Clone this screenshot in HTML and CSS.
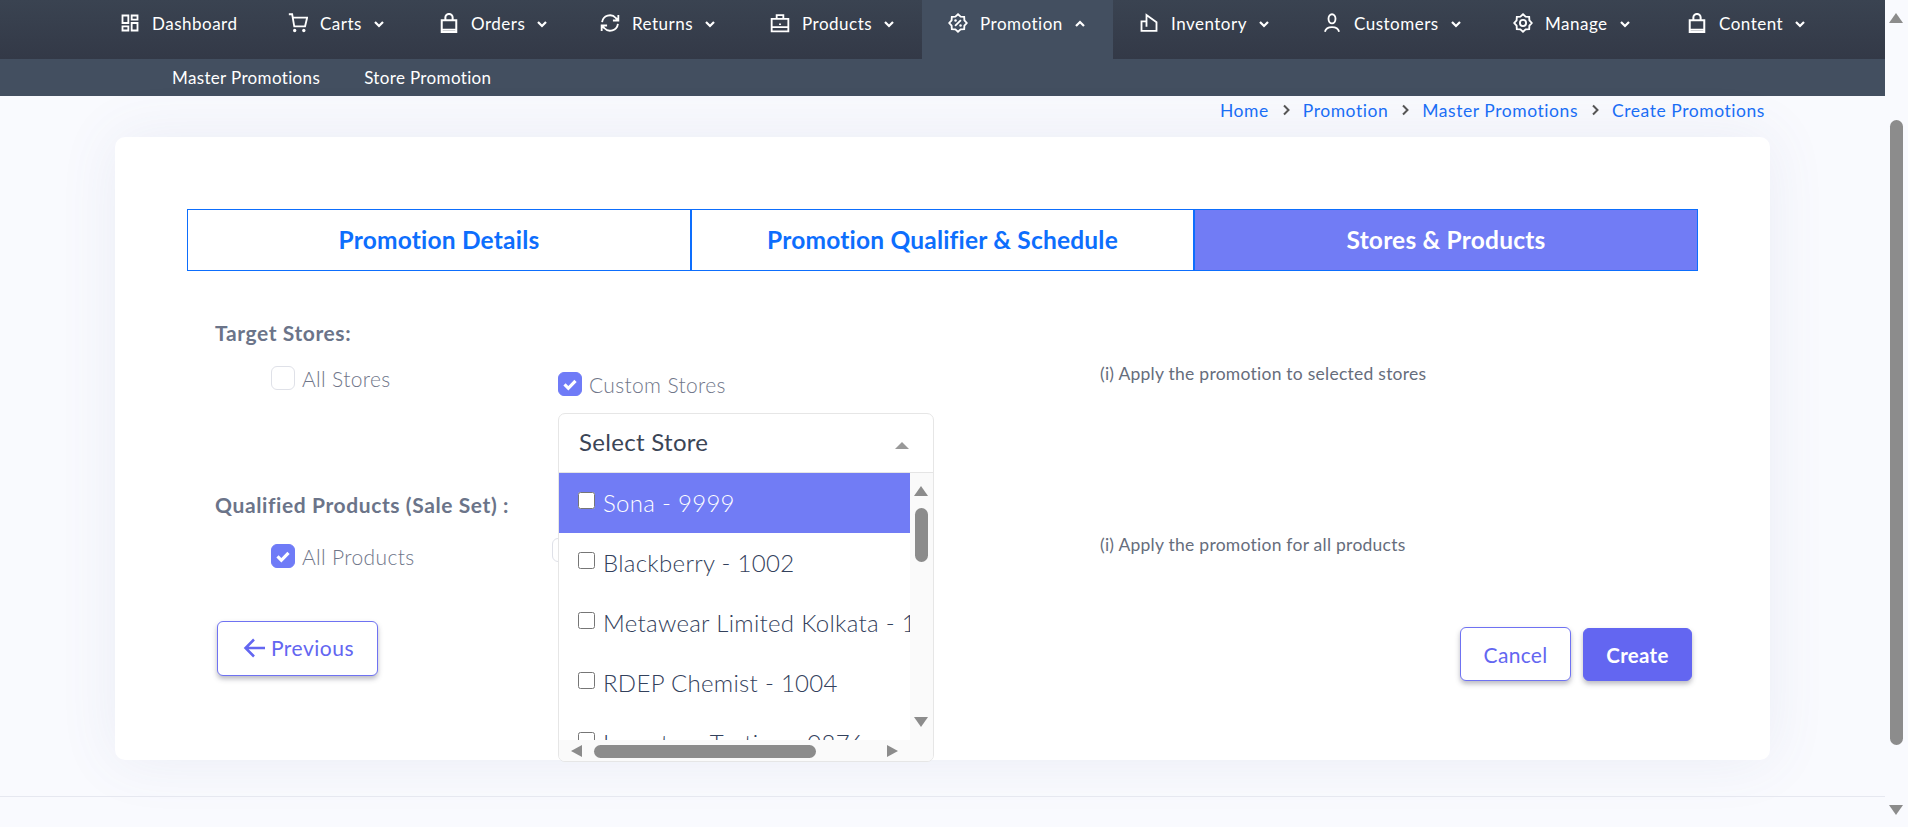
FILE: index.html

```html
<!DOCTYPE html>
<html lang="en">
<head>
    <meta charset="UTF-8">
    <title>Create Promotions</title>
    <link rel="stylesheet" href="styles.css">
</head>
<body>
    <svg class="defs" width="0" height="0">
        <symbol id="i-bag" viewBox="3 1 18 22"><path d="M4 9h16v13H4zM8 9V6a4 4 0 0 1 8 0v3M4 19.500h16"/></symbol>
        <symbol id="i-chev" viewBox="0 0 24 24"><path d="M4 8l8 8 8-8"/></symbol>
        <symbol id="i-chev-up" viewBox="0 0 24 24"><path d="M4 16l8-8 8 8"/></symbol>
        <symbol id="i-right" viewBox="0 0 12 12"><path d="M4 1.500L8.500 6 4 10.500"/></symbol>
        <symbol id="i-tick" viewBox="0 0 24 24"><path d="M6 12.500l4.200 4.200L18 8.500"/></symbol>
    </svg>

    <div class="page">
        <div class="main">
            <div class="topbar">
                <nav class="menu">
                    <a class="menu-item menu-first">
                        <svg class="ico" viewBox="0 0 24 24"><path d="M3 3h7v9H3zM14 3h7v5h-7zM3 16h7v5H3zM14 12h7v9h-7z"/></svg>
                        <span>Dashboard</span>
                    </a>
                    <a class="menu-item">
                        <svg class="ico" viewBox="0 0 24 24"><path d="M1 1.500h4l2.500 14.500h13L23 5.500H5.700"/><circle class="dot" cx="8" cy="21" r="2"/><circle class="dot" cx="19" cy="21" r="2"/></svg>
                        <span>Carts</span>
                        <svg class="chev"><use href="#i-chev"/></svg>
                    </a>
                    <a class="menu-item">
                        <svg class="ico"><use href="#i-bag"/></svg>
                        <span>Orders</span>
                        <svg class="chev"><use href="#i-chev"/></svg>
                    </a>
                    <a class="menu-item">
                        <svg class="ico" viewBox="0 0 24 24"><path d="M2.500 11a9.500 9.500 0 0 1 16.500-5L22 9M22 2.500V9h-6.500M21.500 13a9.500 9.500 0 0 1-16.500 5L2 15M2 21.500V15h6.500"/></svg>
                        <span>Returns</span>
                        <svg class="chev"><use href="#i-chev"/></svg>
                    </a>
                    <a class="menu-item">
                        <svg class="ico" viewBox="0 0 24 24"><path d="M2 7h20v15H2zM8 7V2.500h8V7M2 17h20M12 12.500v2"/></svg>
                        <span>Products</span>
                        <svg class="chev"><use href="#i-chev"/></svg>
                    </a>
                    <a class="menu-item is-open">
                        <svg class="ico" viewBox="0 0 24 24"><path d="M12 1.500l3.180 2.830 4.240.25.25 4.240L22.500 12l-2.830 3.180-.25 4.240-4.240.25L12 22.500l-3.180-2.830-4.240-.25-.25-4.240L1.500 12l2.830-3.180.25-4.240 4.240-.25zM8.500 15.500l7-7"/><circle class="dot" cx="9" cy="9" r="1.500"/><circle class="dot" cx="15" cy="15" r="1.500"/></svg>
                        <span>Promotion</span>
                        <svg class="chev"><use href="#i-chev-up"/></svg>
                    </a>
                    <a class="menu-item">
                        <svg class="ico" viewBox="0 0 24 24"><path d="M3 21.500V10h6V2.500l12 8.500v10.500zM9 10v6.500"/></svg>
                        <span>Inventory</span>
                        <svg class="chev"><use href="#i-chev"/></svg>
                    </a>
                    <a class="menu-item">
                        <svg class="ico" viewBox="0 0 24 24"><ellipse cx="12" cy="7" rx="4.200" ry="5.500"/><path d="M3.500 22.500c1-4 4-5.500 8.500-5.500s7.500 1.500 8.500 5.500"/></svg>
                        <span>Customers</span>
                        <svg class="chev"><use href="#i-chev"/></svg>
                    </a>
                    <a class="menu-item">
                        <svg class="ico" viewBox="0 0 24 24"><path d="M12 1.500l3.180 2.830 4.240.25.25 4.240L22.500 12l-2.830 3.180-.25 4.240-4.240.25L12 22.500l-3.180-2.830-4.240-.25-.25-4.240L1.500 12l2.830-3.180.25-4.240 4.240-.25z"/><circle cx="12" cy="12" r="3.700"/></svg>
                        <span>Manage</span>
                        <svg class="chev"><use href="#i-chev"/></svg>
                    </a>
                    <a class="menu-item">
                        <svg class="ico"><use href="#i-bag"/></svg>
                        <span>Content</span>
                        <svg class="chev"><use href="#i-chev"/></svg>
                    </a>
                </nav>
                <div class="submenu">
                    <a>Master Promotions</a>
                    <a>Store Promotion</a>
                </div>
            </div>

            <div class="crumbs">
                <a>Home</a>
                <svg class="crumb-sep"><use href="#i-right"/></svg>
                <a>Promotion</a>
                <svg class="crumb-sep"><use href="#i-right"/></svg>
                <a>Master Promotions</a>
                <svg class="crumb-sep"><use href="#i-right"/></svg>
                <a>Create Promotions</a>
            </div>

            <div class="card">
                <div class="tabs">
                    <div class="tab">Promotion Details</div>
                    <div class="tab">Promotion Qualifier &amp; Schedule</div>
                    <div class="tab is-active">Stores &amp; Products</div>
                </div>

                <div class="form">
                    <div class="group-title">Target Stores:</div>
                    <div class="opts">
                        <label class="opt opt-first"><span class="check"></span>All Stores</label>
                        <div class="opt-custom">
                            <label class="opt"><span class="check is-on"><svg><use href="#i-tick"/></svg></span>Custom Stores</label>
                            <div class="store-select">
                                <div class="select-head">
                                    <span>Select Store</span>
                                    <span class="caret"></span>
                                </div>
                                <div class="select-body">
                                    <div class="select-list">
                                        <label class="store is-hover"><input type="checkbox"><span>Sona - 9999</span></label>
                                        <label class="store"><input type="checkbox"><span>Blackberry - 1002</span></label>
                                        <label class="store"><input type="checkbox"><span>Metawear Limited Kolkata - 1003</span></label>
                                        <label class="store"><input type="checkbox"><span>RDEP Chemist - 1004</span></label>
                                        <label class="store"><input type="checkbox"><span>Inventory Testing - 0876</span></label>
                                    </div>
                                    <div class="vbar">
                                        <span class="tri tri-up"></span>
                                        <span class="vthumb"></span>
                                        <span class="tri tri-down"></span>
                                    </div>
                                    <div class="hbar">
                                        <span class="tri tri-left"></span>
                                        <span class="hthumb"></span>
                                        <span class="tri tri-right"></span>
                                    </div>
                                </div>
                            </div>
                        </div>
                        <div class="hint">(i) Apply the promotion to selected stores</div>
                    </div>

                    <div class="group-title group-two">Qualified Products (Sale Set) :</div>
                    <div class="opts opts-two">
                        <label class="opt opt-first"><span class="check is-on"><svg><use href="#i-tick"/></svg></span>All Products</label>
                        <div class="opt-hidden"><span class="check"></span></div>
                        <div class="hint hint-two">(i) Apply the promotion for all products</div>
                    </div>

                    <div class="actions">
                        <button class="btn btn-prev">
                            <svg viewBox="0 0 24 24"><path d="M22 12H3M11 3.500L2.500 12l8.500 8.500"/></svg>Previous
                        </button>
                        <div class="actions-right">
                            <button class="btn btn-cancel">Cancel</button>
                            <button class="btn btn-create">Create</button>
                        </div>
                    </div>
                </div>
            </div>

            <div class="footer"></div>
        </div>

        <div class="pagebar">
            <span class="tri-page tri-page-up"></span>
            <span class="pagebar-thumb"></span>
            <span class="tri-page tri-page-down"></span>
        </div>
    </div>
</body>
</html>
```

FILE: styles.css

```css
* {
    box-sizing: border-box;
}

html, body {
    margin: 0;
    height: 827px;
    overflow: hidden;
}

body {
    font-family: "Lato", "Open Sans", sans-serif;
    font-size: 16px;
    background: #f9fafe;
    color: #3b4556;
}

.defs {
    position: absolute;
}

.page {
    display: flex;
    height: 827px;
}

.main {
    flex: 1;
    min-width: 0;
}

/* top navigation */
.topbar {
    background: #434f60;
    height: 96px;
}

.menu {
    display: grid;
    grid-template-columns: 167px 151px 161px 170px 178px 191px 183px 191px 174px 1fr;
    height: 59px;
    padding-left: 95px;
    background: linear-gradient(to bottom, #3a4351, #333947);
}

.menu-item {
    display: flex;
    align-items: center;
    padding: 0 0 2px 26px;
    height: 48px;
    color: #fff;
    letter-spacing: 0.5px;
    font-size: 17px;
}

.menu-first {
    padding-left: 25px;
}

.menu-item.is-open {
    background: #434f60;
    height: 59px;
    padding-bottom: 13px;
}

.ico {
    width: 20px;
    height: 20px;
    margin-right: 12px;
    fill: none;
    stroke: #fff;
    stroke-width: 2.200;
    flex: none;
}

.ico .dot {
    fill: #fff;
    stroke: none;
}

.chev {
    width: 12px;
    height: 12px;
    margin-left: 11px;
    margin-top: 2px;
    fill: none;
    stroke: #fff;
    stroke-width: 4.500;
    flex: none;
}

.submenu {
    display: flex;
    gap: 44px;
    height: 37px;
    align-items: center;
    padding-left: 172px;
    color: #fff;
    font-size: 17px;
    letter-spacing: 0.35px;
}

/* breadcrumb */
.crumbs {
    display: flex;
    justify-content: flex-end;
    align-items: center;
    height: 28px;
    padding-right: 120px;
    color: #1a6ef5;
    font-size: 17.500px;
    letter-spacing: 0.55px;
}

.crumb-sep {
    width: 12px;
    height: 12px;
    margin: 0 11px;
    fill: none;
    stroke: #555;
    stroke-width: 2;
}

/* card */
.card {
    width: 1655px;
    height: 623px;
    margin: 13px 0 0 115px;
    padding: 72px 72px 0;
    background: #fff;
    border-radius: 10px;
    box-shadow: 0 0 60px rgba(90, 100, 150, 0.09);
}

.tabs {
    display: grid;
    grid-template-columns: 502px 503px 1fr;
    height: 62px;
    border: 1px solid #0d6efd;
}

.tab {
    display: flex;
    align-items: center;
    justify-content: center;
    padding-bottom: 2px;
    color: #0d6efd;
    font-size: 24.500px;
    font-weight: 700;
    letter-spacing: 0.2px;
    border-left: 2px solid #0d6efd;
}

.tab:first-child {
    border-left: 0;
}

.tab.is-active {
    background: #717cf5;
    color: #fff;
}

.form {
    padding: 50px 6px 0 28px;
}

.group-title {
    height: 24px;
    line-height: 24px;
    font-size: 21px;
    font-weight: 700;
    color: #6b7489;
    letter-spacing: 0.6px;
}

.group-two {
    margin-top: 103px;
}

.opts {
    display: grid;
    grid-template-columns: 343px 542px 1fr;
    margin-top: 21px;
    height: 24px;
}

.opts-two {
    margin-top: 27px;
}

.opt {
    display: flex;
    align-items: center;
    height: 24px;
    font-size: 21px;
    font-weight: 300;
    color: #6f7689;
    letter-spacing: 0.35px;
}

.opt-first {
    padding-left: 56px;
}

.opt-custom {
    position: relative;
    padding-top: 6px;
}

.opt-hidden {
    margin: -6px 0 0 -6px;
}

.check {
    display: flex;
    align-items: center;
    justify-content: center;
    width: 24px;
    height: 24px;
    margin-right: 7px;
    background: #fff;
    border: 1px solid #dfe1e8;
    border-radius: 6px;
}

.check.is-on {
    background: #6f7bf7;
    border-color: #6f7bf7;
}

.check svg {
    width: 22px;
    height: 22px;
    fill: none;
    stroke: #fff;
    stroke-width: 3.500;
}

.hint {
    margin-top: -3px;
    font-size: 17.500px;
    color: #666d7c;
    letter-spacing: 0.25px;
}

.hint-two {
    margin-top: -10px;
}

/* store dropdown, sits over the rows below */
.store-select {
    position: absolute;
    top: 47px;
    left: 0;
    z-index: 2;
    width: 376px;
    height: 349px;
    background: #fff;
    border: 1px solid #e6e6e6;
    border-radius: 7px;
    overflow: hidden;
}

.select-head {
    display: flex;
    align-items: center;
    justify-content: space-between;
    height: 59px;
    padding: 0 24px 4px 20px;
    font-size: 24px;
    color: #3b4556;
    border-bottom: 1px solid #e5e5e5;
    letter-spacing: 0.3px;
}

.caret {
    margin-top: 9px;
    border-left: 7px solid transparent;
    border-right: 7px solid transparent;
    border-bottom: 7px solid #999;
}

.select-body {
    position: relative;
    height: 289px;
}

.select-list {
    width: 351px;
    height: 267px;
    overflow: hidden;
}

.store {
    display: flex;
    align-items: center;
    height: 60px;
    padding: 0 0 1px 19px;
    font-size: 24px;
    font-weight: 300;
    color: #33415c;
    white-space: nowrap;
    letter-spacing: 0.3px;
}

.store input {
    width: 17px;
    height: 17px;
    margin: -4px 8px 0 0;
    flex: none;
}

.store.is-hover {
    background: #717cf5;
    color: #fff;
}

.vbar {
    position: absolute;
    top: 0;
    right: 0;
    width: 23px;
    height: 267px;
    background: #fafafa;
}

.vthumb {
    position: absolute;
    top: 35px;
    left: 5px;
    width: 13px;
    height: 54px;
    background: #8c8c8c;
    border-radius: 7px;
}

.hbar {
    position: absolute;
    left: 0;
    right: 0;
    bottom: 0;
    height: 22px;
    background: #fafafa;
}

.hthumb {
    position: absolute;
    top: 5px;
    left: 35px;
    width: 222px;
    height: 13px;
    background: #8c8c8c;
    border-radius: 7px;
}

.tri {
    position: absolute;
    width: 0;
    height: 0;
}

.tri-up {
    top: 13px;
    left: 4px;
    border-left: 7.500px solid transparent;
    border-right: 7.500px solid transparent;
    border-bottom: 10px solid #8c8c8c;
}

.tri-down {
    top: 244px;
    left: 4px;
    border-left: 7.500px solid transparent;
    border-right: 7.500px solid transparent;
    border-top: 10px solid #8c8c8c;
}

.tri-left {
    top: 5px;
    left: 12px;
    border-top: 6.500px solid transparent;
    border-bottom: 6.500px solid transparent;
    border-right: 11px solid #8c8c8c;
}

.tri-right {
    top: 5px;
    left: 328px;
    border-top: 6.500px solid transparent;
    border-bottom: 6.500px solid transparent;
    border-left: 11px solid #8c8c8c;
}

/* buttons */
.actions {
    display: flex;
    justify-content: space-between;
    align-items: flex-start;
    margin-top: 53px;
}

.actions-right {
    display: flex;
    align-items: flex-start;
    gap: 12px;
    padding-top: 6px;
}

.btn {
    display: flex;
    align-items: center;
    justify-content: center;
    font-family: inherit;
    font-size: 21px;
    letter-spacing: 0.3px;
    color: #6366f1;
    background: #fff;
    border: 1px solid #6f72f2;
    border-radius: 6px;
    box-shadow: 0 3px 5px rgba(60, 60, 80, 0.35);
}

.btn-prev {
    width: 161px;
    height: 55px;
    margin-left: 2px;
    padding: 0 0 2px 2px;
    letter-spacing: 0.5px;
}

.btn-prev svg {
    width: 24px;
    height: 24px;
    margin-right: 4px;
    fill: none;
    stroke: #6366f1;
    stroke-width: 2.500;
}

.btn-cancel {
    width: 111px;
    height: 54px;
}

.btn-create {
    width: 109px;
    height: 53px;
    margin-top: 1px;
    background: #6366f1;
    border-color: #6366f1;
    color: #fff;
    font-size: 20.500px;
    font-weight: 700;
}

.footer {
    margin-top: 36px;
    border-top: 1px solid #e6e8f0;
}

/* page scrollbar */
.pagebar {
    position: relative;
    flex: none;
    width: 23px;
    background: #f9fafe;
}

.pagebar-thumb {
    position: absolute;
    top: 120px;
    left: 5px;
    width: 13px;
    height: 625px;
    background: #8c8c8c;
    border-radius: 7px;
}

.tri-page {
    position: absolute;
    left: 4px;
    width: 0;
    height: 0;
    border-left: 7.500px solid transparent;
    border-right: 7.500px solid transparent;
}

.tri-page-up {
    top: 13px;
    border-bottom: 10px solid #8c8c8c;
}

.tri-page-down {
    top: 805px;
    border-top: 10px solid #8c8c8c;
}
```
